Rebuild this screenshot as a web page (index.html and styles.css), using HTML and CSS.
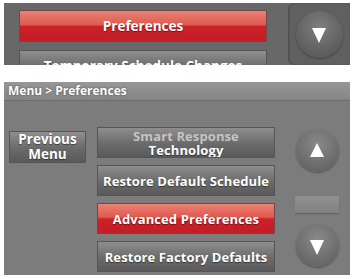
FILE: index.html
```html
<!DOCTYPE html>
<html lang="en">
<head>
    <meta charset="UTF-8">
    <title>Preferences Menu</title>
    <link rel="stylesheet" href="styles.css">
</head>
<body>

<!-- Layar menu utama (terpotong) -->
<div class="top-panel">
    <div class="top-list">
        <div class="btn btn-red btn-wide">Preferences</div>
        <div class="btn btn-gray btn-wide btn-faded">Temporary Schedule Changes</div>
    </div>
    <div class="top-nav">
        <div class="round-btn round-big"><span class="tri tri-down"></span></div>
    </div>
</div>

<!-- Layar Preferences -->
<div class="menu-panel">
    <div class="menu-header">Menu &gt; Preferences</div>
    <div class="menu-body">
        <div class="btn btn-gray btn-prev">Previous<br>Menu</div>

        <div class="menu-list">
            <div class="btn btn-gray btn-two">
                <span class="faded-line">Smart Response</span>
                <span>Technology</span>
            </div>
            <div class="btn btn-gray">Restore Default Schedule</div>
            <div class="btn btn-red">Advanced Preferences</div>
            <div class="btn btn-gray">Restore Factory Defaults</div>
        </div>

        <div class="menu-nav">
            <div class="round-btn"><span class="tri tri-up"></span></div>
            <div class="scroll-bar"></div>
            <div class="round-btn"><span class="tri tri-down"></span></div>
        </div>
    </div>
</div>

</body>
</html>
```

FILE: styles.css
```css
/* Dasar halaman */
body {
    margin: 0;
    background-color: #fff;
    font-family: "Open Sans", "DejaVu Sans", sans-serif;
}

/* Panel atas */
.top-panel {
    display: flex;
    width: 346px;
    height: 62px;
    margin: 3px 0 0 4px;
    background-color: #686868;
    overflow: hidden;
}

.top-list {
    width: 264px;
    padding: 7px 0 0 15px;
}

.top-list .btn-wide {
    width: 248px;
    height: 32px;
    font-size: 13.5px;
    margin-bottom: 8px;
}

.btn-faded {
    color: #9a9a9a;
    text-shadow: none;
}

.top-nav {
    flex: 1;
    margin-left: 5px;
    display: flex;
    align-items: center;
    justify-content: center;
    background-color: #606060;
    border-radius: 6px 0 0 6px;
    box-shadow: inset 1px 0 2px rgba(0, 0, 0, 0.25);
}

/* Panel preferences */
.menu-panel {
    width: 346px;
    height: 193px;
    margin: 17px 0 0 4px;
    background-color: #7c7c7c;
}

.menu-header {
    height: 18px;
    line-height: 18px;
    padding-left: 4px;
    font-size: 12px;
    font-weight: bold;
    color: #fff;
    background: linear-gradient(#979797, #858585);
    border-bottom: 1px solid #6c6c6c;
    text-shadow: 0 0 2px rgba(0, 0, 0, 0.5);
}

.menu-body {
    display: flex;
    padding-left: 5px;
}

.btn-prev {
    width: 77px;
    height: 32px;
    margin-top: 30px;
    line-height: 15px;
    font-size: 13.5px;
    overflow: visible;
}

.menu-list {
    display: flex;
    flex-direction: column;
    gap: 7px;
    width: 178px;
    margin: 26px 0 0 11px;
}

.menu-list .btn {
    height: 31px;
    font-size: 13px;
    letter-spacing: 0.1px;
}

.btn-two {
    flex-direction: column;
    line-height: 14px;
}

.faded-line {
    color: #c4c4c4;
    text-shadow: none;
}

.menu-nav {
    display: flex;
    flex-direction: column;
    align-items: center;
    width: 44px;
    margin: 28px 0 0 20px;
}

.scroll-bar {
    width: 44px;
    height: 17px;
    margin: 24px 0 11px;
    background: linear-gradient(#909090, #828282);
    box-shadow: 0 1px 1px rgba(0, 0, 0, 0.2);
}

/* Tombol */
.btn {
    display: flex;
    align-items: center;
    justify-content: center;
    text-align: center;
    box-sizing: border-box;
    font-weight: bold;
    color: #fff;
    border: 1px solid #555;
    text-shadow: 0 1px 1px rgba(0, 0, 0, 0.45);
    white-space: nowrap;
    overflow: hidden;
}

.btn-gray {
    background: linear-gradient(#8e8e8e, #6a6a6a 55%, #5a5a5a);
}

.btn-red {
    background: linear-gradient(#eb8175, #df5a4e 45%, #cb2129 52%, #c41d25);
    border-color: #6a4a4a;
}

/* Tombol bulat panah */
.round-btn {
    display: flex;
    align-items: center;
    justify-content: center;
    width: 43px;
    height: 43px;
    border-radius: 50%;
    background: radial-gradient(circle at 50% 35%, #8a8a8a, #6d6d6d 60%, #5c5c5c);
    box-shadow: 0 1px 2px rgba(0, 0, 0, 0.35);
}

.round-big {
    width: 47px;
    height: 47px;
    background: radial-gradient(circle at 50% 35%, #7e7e7e, #626262 60%, #525252);
}

.tri {
    width: 0;
    height: 0;
    border-left: 7px solid transparent;
    border-right: 7px solid transparent;
}

.tri-down {
    border-top: 15px solid #fff;
    margin-top: 3px;
}

.tri-up {
    border-bottom: 14px solid #fff;
    margin-bottom: 1px;
}
```
